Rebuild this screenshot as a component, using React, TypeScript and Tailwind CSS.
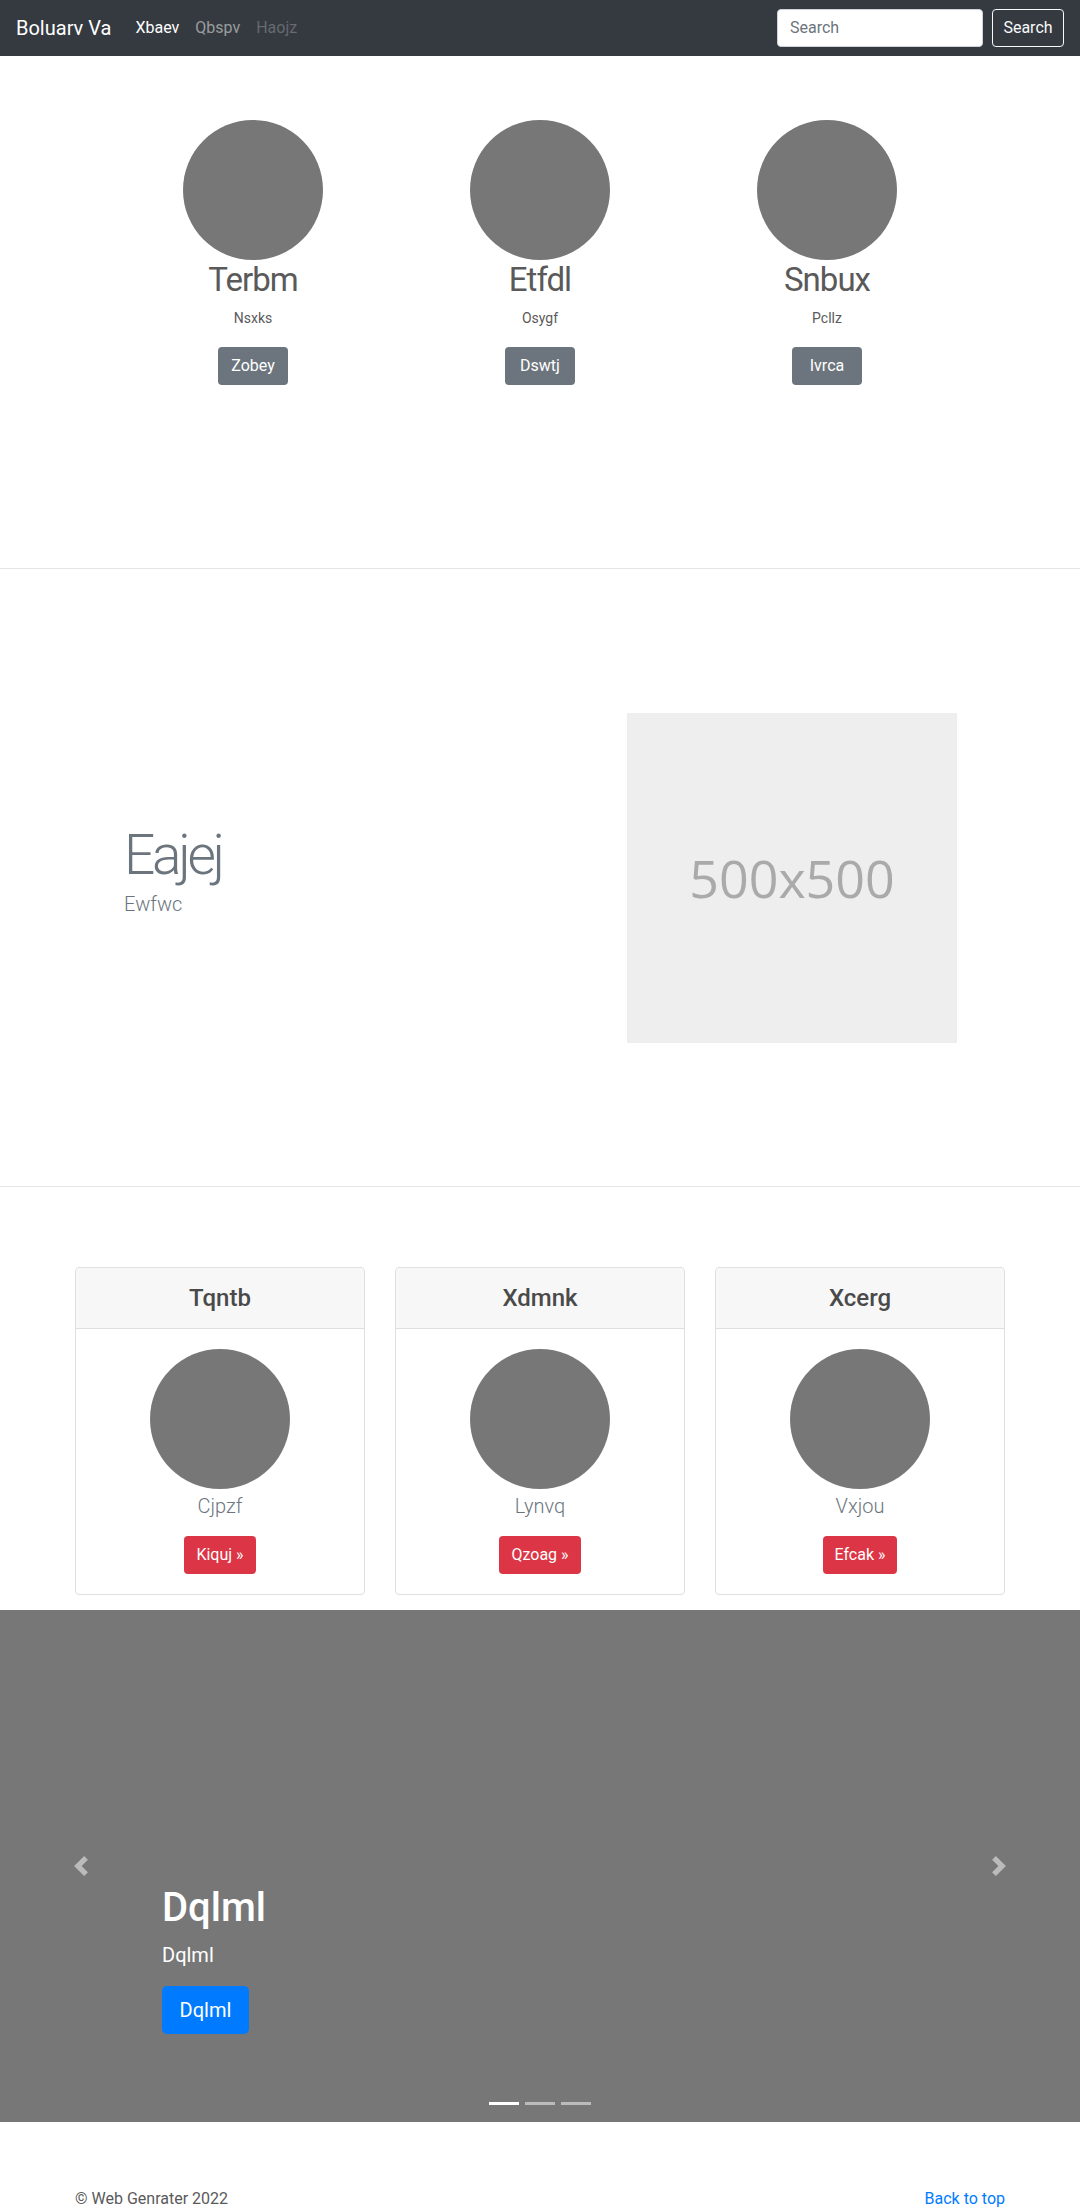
import React from "react";

const people = [
  { name: "Terbm", sub: "Nsxks", btn: "Zobey" },
  { name: "Etfdl", sub: "Osygf", btn: "Dswtj" },
  { name: "Snbux", sub: "Pcllz", btn: "Ivrca" },
];

const cards = [
  { title: "Tqntb", sub: "Cjpzf", btn: "Kiquj »" },
  { title: "Xdmnk", sub: "Lynvq", btn: "Qzoag »" },
  { title: "Xcerg", sub: "Vxjou", btn: "Efcak »" },
];

export default function App() {
  return (
    <div className="font-['Roboto','Open_Sans',sans-serif] text-[#5a5a5a] bg-white w-[1080px]">
      {/* Navbar */}
      <nav className="h-14 bg-[#343a40] flex items-center px-4">
        <span className="text-[20px] leading-[30px] text-white mr-4">Boluarv Va</span>
        <ul className="flex items-center text-[16px] leading-6">
          <li className="px-2 text-white">Xbaev</li>
          <li className="px-2 text-white/50">Qbspv</li>
          <li className="px-2 text-white/25">Haojz</li>
        </ul>
        <div className="ml-auto flex items-center gap-[9px]">
          <div className="w-[206px] h-[38px] bg-white rounded border border-[#ced4da] px-3 flex items-center text-[16px] text-[#6c757d]">
            Search
          </div>
          <div className="h-[38px] w-[72px] rounded border border-[#f8f9fa] flex items-center justify-center text-[16px] text-[#f8f9fa]">
            Search
          </div>
        </div>
      </nav>

      {/* Section 1 */}
      <section className="h-[513px] border-b border-[#e6e6e6] pt-16">
        <div className="w-[861px] mx-auto grid grid-cols-3">
          {people.map((p) => (
            <div key={p.name} className="flex flex-col items-center">
              <div className="w-[140px] h-[140px] rounded-full bg-[#777]" />
              <h2 className="text-[33px] leading-[40px] font-normal tracking-[-0.03em] text-[#5a5a5a]">{p.name}</h2>
              <p className="mt-2 text-[14px] leading-[21px] text-[#5a5a5a]">{p.sub}</p>
              <div className="mt-[18px] h-[38px] w-[70px] justify-center rounded bg-[#6c757d] text-white text-[16px] flex items-center">
                {p.btn}
              </div>
            </div>
          ))}
        </div>
      </section>

      {/* Section 2 */}
      <section className="border-b border-[#e6e6e6] pt-[144px] pb-[143px] flex items-center">
        <div className="w-[627px] pl-[124px]">
          <h1 className="text-[55px] leading-[67px] font-light tracking-[-0.06em] text-[#6c757d]">Eajej</h1>
          <p className="text-[20px] leading-[30px] font-light text-[#6c757d] mb-4">Ewfwc</p>
        </div>
        <div className="w-[330px] h-[330px] bg-[#eeeeee] flex items-center justify-center">
          <span className="font-['Open_Sans',sans-serif] text-[52px] text-[#aaaaaa]">500x500</span>
        </div>
      </section>

      {/* Section 3: cards */}
      <section className="pt-[80px] pb-[15px]">
        <div className="w-[930px] mx-auto grid grid-cols-3 gap-[30px]">
          {cards.map((c) => (
            <div key={c.title} className="border border-[#dfdfdf] rounded flex flex-col">
              <div className="h-[61px] bg-[#f7f7f7] border-b border-[#dfdfdf] rounded-t flex items-center justify-center">
                <h4 className="text-[24px] leading-[29px] font-medium text-[#4a4a4a]">{c.title}</h4>
              </div>
              <div className="p-5 flex flex-col items-center">
                <div className="w-[140px] h-[140px] rounded-full bg-[#777]" />
                <p className="mt-[2px] text-[20px] leading-[30px] font-light text-[#6c757d]">{c.sub}</p>
                <div className="mt-[15px] h-[38px] px-3 rounded bg-[#dc3545] text-white text-[16px] flex items-center">
                  {c.btn}
                </div>
              </div>
            </div>
          ))}
        </div>
      </section>

      {/* Carousel */}
      <section className="relative h-[512px] bg-[#777]">
        <div className="absolute left-0 top-0 h-full w-[162px] flex items-center justify-center">
          <svg width="20" height="20" viewBox="0 0 8 8" className="opacity-50">
            <path fill="#fff" d="M5.25 0l-4 4 4 4 1.5-1.5L4.25 4l2.5-2.5L5.25 0z" />
          </svg>
        </div>
        <div className="absolute right-0 top-0 h-full w-[162px] flex items-center justify-center">
          <svg width="20" height="20" viewBox="0 0 8 8" className="opacity-50">
            <path fill="#fff" d="M2.75 0l-1.5 1.5L3.75 4l-2.5 2.5L2.75 8l4-4-4-4z" />
          </svg>
        </div>
        <div className="absolute left-[162px] top-[274px] text-white">
          <h1 className="text-[40px] leading-[48px] font-medium mb-2">Dqlml</h1>
          <p className="text-[20px] leading-[30px] mb-4">Dqlml</p>
          <div className="inline-flex h-[48px] w-[87px] justify-center items-center rounded-[5px] bg-[#007bff] text-[20px] text-white">
            Dqlml
          </div>
        </div>
        <div className="absolute bottom-[17px] left-0 right-0 flex justify-center gap-[6px]">
          <span className="w-[30px] h-[3px] bg-white" />
          <span className="w-[30px] h-[3px] bg-white/50" />
          <span className="w-[30px] h-[3px] bg-white/50" />
        </div>
      </section>

      {/* Footer */}
      <footer className="w-[930px] mx-auto pt-[65px] flex justify-between text-[16px] leading-6 text-[#5a5a5a]">
        <p>© Web Genrater 2022</p>
        <p className="text-[#007bff]">Back to top</p>
      </footer>
    </div>
  );
}
